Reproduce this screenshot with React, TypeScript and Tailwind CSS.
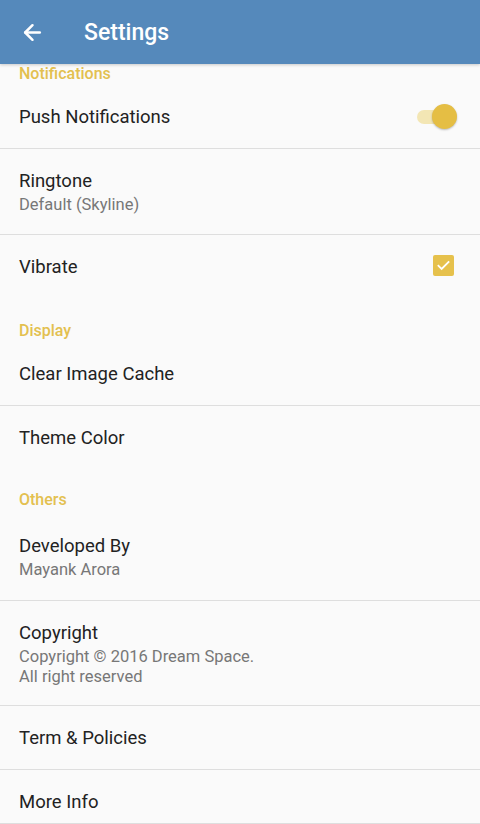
import { ArrowLeft } from 'lucide-react';

const accent = 'text-[#e3c04f]';

const Category = ({ label, className = '' }: { label: string; className?: string }) => (
    <div className={`px-[19px] shrink-0 ${className}`}>
        <div className={`text-[16px] leading-[20px] font-medium ${accent}`}>{label}</div>
    </div>
);

const Row = ({
    title,
    lines,
    right,
    divider = true,
    className = '',
}: {
    title: string;
    lines?: string[];
    right?: React.ReactNode;
    divider?: boolean;
    className?: string;
}) => (
    <div className={`shrink-0 flex items-start justify-between pl-[19px] pr-[27px] pt-[20px] ${lines ? 'pb-[19px]' : 'h-[64px]'} ${divider ? 'border-b border-[#dedede]' : ''} ${className}`}>
        <div className="flex flex-col">
            <div className="text-[18.5px] leading-[24px] text-[#222222]">{title}</div>
            {lines && (
                <div className="mt-[2px] text-[16.5px] leading-[20px] text-[#777777]">
                    {lines.map(l => (
                        <div key={l}>{l}</div>
                    ))}
                </div>
            )}
        </div>
        {right}
    </div>
);

const Toggle = () => (
    <div className="relative w-[36px] h-[24px]">
        <div className="absolute left-0 top-[5px] w-[34px] h-[14px] rounded-full bg-[#f3e6b4]" />
        <div className="absolute right-[-4px] top-[-1px] w-[25px] h-[25px] rounded-full bg-[#e5be44] shadow-[0_1px_2px_rgba(0,0,0,0.25)]" />
    </div>
);

const Checkbox = () => (
    <div className="mr-[-1px] w-[21px] h-[21px] rounded-[2px] bg-[#e6c14c] flex items-center justify-center">
        <svg width="15" height="15" viewBox="0 0 24 24" fill="none" stroke="white" strokeWidth="3" strokeLinecap="square">
            <path d="M4 12.5l5 5L20 6.5" />
        </svg>
    </div>
);

export default function App() {
    return (
        <div className="w-[480px] h-[824px] overflow-hidden bg-[#fafafa] flex flex-col" style={{ fontFamily: 'Roboto, "Noto Sans", sans-serif' }}>
            <div className="h-[64px] shrink-0 bg-[#5589bb] flex items-center text-white shadow-[0_1px_3px_rgba(0,0,0,0.2)] z-10">
                <ArrowLeft size={25} strokeWidth={2.4} className="ml-[20px]" />
                <div className="ml-[39px] text-[23px] font-medium leading-none">Settings</div>
            </div>

            <Category label="Notifications" className="h-[21px]" />
            <Row title="Push Notifications" right={<Toggle />} />
            <Row title="Ringtone" lines={['Default (Skyline)']} />
            <Row title="Vibrate" right={<Checkbox />} divider={false} className="!h-[63px]" />

            <Category label="Display" className="pt-[23px] h-[44px]" />
            <Row title="Clear Image Cache" />
            <Row title="Theme Color" divider={false} />

            <Category label="Others" className="pt-[20px] h-[44px]" />
            <Row title="Developed By" lines={['Mayank Arora']} className="pt-[19px] !pb-[20px]" />
            <Row title="Copyright" lines={['Copyright © 2016 Dream Space.', 'All right reserved']} className="!pb-[18px]" />
            <Row title="Term & Policies" />
            <Row title="More Info" className="!h-[54px] border-[#cfcfcf]" />
        </div>
    );
}
